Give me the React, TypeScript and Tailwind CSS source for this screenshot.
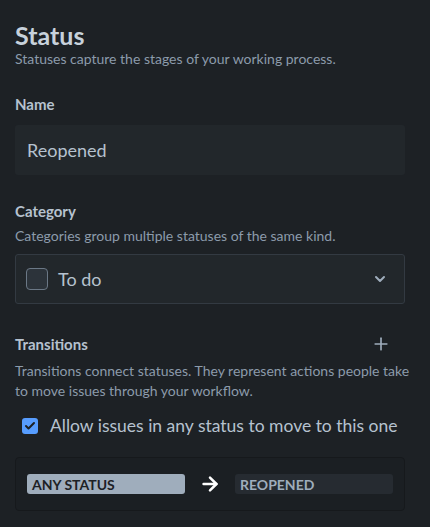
import React from 'react';
import { ChevronDown, Plus, ArrowRight, Check } from 'lucide-react';

export default function App() {
  return (
    <div className="h-[527px] w-[430px] overflow-hidden bg-[#1d2125] px-[15px] pt-[19px] font-['Lato',sans-serif] text-[#b6c2cf]">
      <h1 className="text-[25px] font-bold leading-[32px] text-[#c7d1db]">Status</h1>
      <p className="text-[14px] leading-[16px] text-[#8c9bab]">Statuses capture the stages of your working process.</p>

      <div className="mt-[28px] text-[15px] font-bold leading-[18px] text-[#b6c2cf]">Name</div>
      <div className="mt-[12px] flex h-[50px] w-[390px] items-center rounded-[3px] bg-[#22272b] px-[12px] text-[18px] text-[#b6c2cf]">
        Reopened
      </div>

      <div className="mt-[27px] text-[15px] font-bold leading-[18px]">Category</div>
      <p className="mt-[8px] text-[14px] leading-[16px] text-[#8c9bab]">Categories group multiple statuses of the same kind.</p>
      <div className="mt-[10px] flex h-[50px] w-[390px] items-center rounded-[3px] border border-[#333a42] bg-[#22272b] pl-[10px] pr-[16px]">
        <span className="h-[22px] w-[22px] rounded-[4px] border border-[#6b7886] bg-[#2c333a]" />
        <span className="ml-[10px] text-[18px] text-[#b6c2cf]">To do</span>
        <ChevronDown className="ml-auto h-[16px] w-[16px] text-[#9fadbc]" strokeWidth={3} />
      </div>

      <div className="mt-[30px] flex items-center justify-between pr-[24px]">
        <span className="text-[15px] font-bold leading-[18px]">Transitions</span>
        <Plus className="h-[20px] w-[20px] text-[#9fadbc]" strokeWidth={2} />
      </div>
      <p className="mt-[7px] w-[395px] text-[14px] leading-[20px] text-[#8c9bab]">
        Transitions connect statuses. They represent actions people take to move issues through your workflow.
      </p>

      <label className="ml-[7px] mt-[13px] flex items-center gap-[12px]">
        <span className="flex h-[16px] w-[16px] items-center justify-center rounded-[3px] bg-[#579dff]">
          <Check className="h-[12px] w-[12px] text-[#1d2125]" strokeWidth={4} />
        </span>
        <span className="text-[17.5px] leading-[24px] text-[#b6c2cf]">Allow issues in any status to move to this one</span>
      </label>

      <div className="mt-[19px] flex h-[54px] w-[390px] items-center rounded-[4px] border border-[#16191c] bg-[#1b1f23] px-[11px]">
        <span className="flex h-[20px] w-[158px] items-center rounded-[3px] bg-[#9fadbc] px-[5px] text-[14px] font-bold text-[#1d2125]">
          ANY STATUS
        </span>
        <ArrowRight className="mx-[14px] h-[22px] w-[22px] text-white" strokeWidth={2.75} />
        <span className="flex h-[20px] w-[158px] items-center rounded-[3px] bg-[#262b31] px-[5px] text-[14px] font-bold text-[#9fadbc]">
          REOPENED
        </span>
      </div>
    </div>
  );
}
